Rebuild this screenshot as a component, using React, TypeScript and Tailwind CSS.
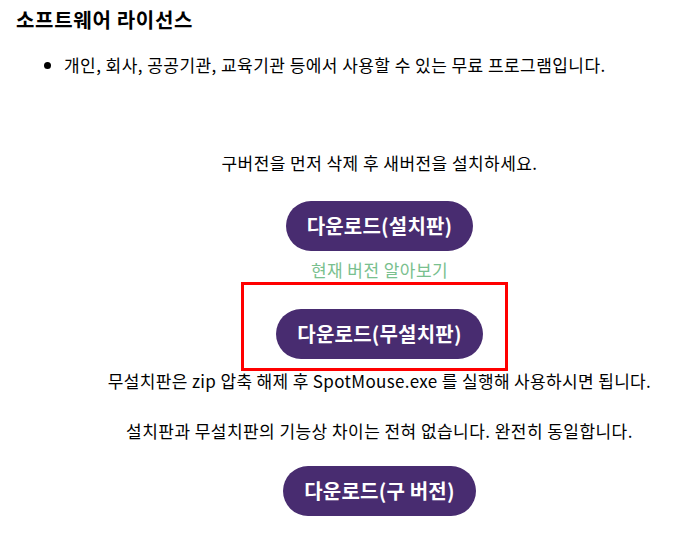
import React from "react";

const font = { fontFamily: '"Noto Sans CJK KR", "Noto Sans", sans-serif' };

function DownloadButton({ label }: { label: string }) {
  return (
    <a
      href="#"
      className="inline-flex h-[50px] items-center justify-center rounded-full bg-[#482c70] px-[21px] text-[20px] font-bold tracking-[0.2px] text-white no-underline"
    >
      {label}
    </a>
  );
}

export default function App() {
  return (
    <div className="min-h-[536px] bg-white pt-2 text-black" style={font}>
      <h3 className="px-4 text-[20px] font-bold leading-[24px] tracking-[0.7px]">소프트웨어 라이선스</h3>
      <ul className="mt-[21px] list-disc pl-16 text-[17px] leading-[24px] tracking-[0.45px]">
        <li>개인, 회사, 공공기관, 교육기관 등에서 사용할 수 있는 무료 프로그램입니다.</li>
      </ul>

      <div className="ml-16 flex flex-col items-center text-[17px] leading-[24px] tracking-[0.45px]">
        <p className="mt-[74px]">구버전을 먼저 삭제 후 새버전을 설치하세요.</p>

        <div className="mt-[26px]">
          <DownloadButton label="다운로드(설치판)" />
        </div>

        <a href="#" className="mt-[7px] text-[#79c08e] no-underline">
          현재 버전 알아보기
        </a>

        <div className="relative mt-[27px] flex w-full justify-center">
          <DownloadButton label="다운로드(무설치판)" />
          {/* highlight frame around the portable download */}
          <div className="pointer-events-none absolute left-[177px] top-[-27px] h-[89px] w-[267px] border-[3px] border-[#ff0000]" />
        </div>

        <p className="mt-[10px] tracking-[0.35px]">무설치판은 zip 압축 해제 후 SpotMouse.exe 를 실행해 사용하시면 됩니다.</p>
        <p className="mt-[26px]">설치판과 무설치판의 기능상 차이는 전혀 없습니다. 완전히 동일합니다.</p>

        <div className="mt-[23px]">
          <DownloadButton label="다운로드(구 버전)" />
        </div>
      </div>
    </div>
  );
}
